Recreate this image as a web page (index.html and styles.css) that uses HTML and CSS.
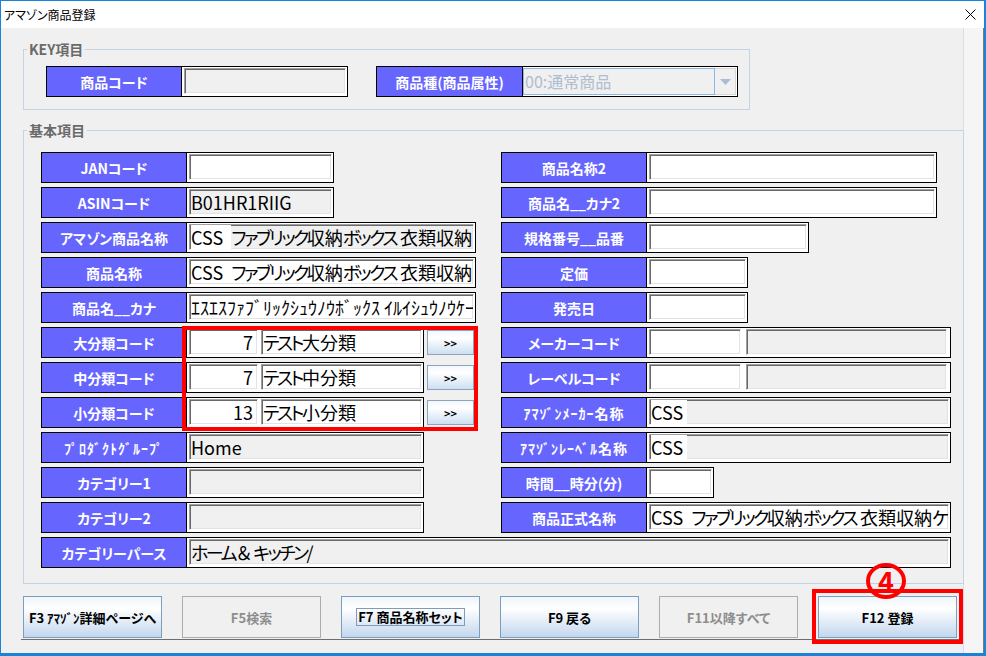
FILE: index.html
```html
<!DOCTYPE html>
<html lang="ja">
<head>
<meta charset="utf-8">
<title>アマゾン商品登録</title>
<link rel="stylesheet" href="styles.css">
</head>
<body>
<div class="window">
  <div class="titlebar">
    <span class="title">アマゾン商品登録</span>
    <svg class="close" width="11" height="11" viewBox="0 0 11 11"><path d="M0.5 0.5 L10.5 10.5 M10.5 0.5 L0.5 10.5" stroke="#000" stroke-width="1" fill="none"/></svg>
  </div>
  <div class="client">
    <div class="panel">
      <fieldset class="group key">
        <legend>KEY項目</legend>
        <div class="key-inner">
          <div class="field w302"><div class="lbl lk1">商品コード</div><div class="area"><div class="box g"></div></div></div>
          <div class="field w362"><div class="lbl lk2">商品種(商品属性)</div>
            <div class="area carea"><div class="combo"><span class="ctext">00:通常商品</span><span class="cbtn"><svg width="11" height="6" viewBox="0 0 11 6"><path d="M0 0 H11 L5.5 6 Z" fill="#a9bcd3"/></svg></span></div></div>
          </div>
        </div>
      </fieldset>

      <fieldset class="group basic">
        <legend>基本項目</legend>
        <div class="grid">
          <div class="cell"><div class="field w293"><div class="lbl">JANコード</div><div class="area"><div class="box"></div></div></div></div>
          <div class="cell"><div class="field w436"><div class="lbl">商品名称2</div><div class="area"><div class="box"></div></div></div></div>

          <div class="cell"><div class="field w293"><div class="lbl">ASINコード</div><div class="area"><div class="box g">B01HR1RIIG</div></div></div></div>
          <div class="cell"><div class="field w436"><div class="lbl">商品名__カナ2</div><div class="area"><div class="box"></div></div></div></div>

          <div class="cell"><div class="field w435"><div class="lbl">アマゾン商品名称</div><div class="area"><div class="box g"><span class="hl">CSS&nbsp; </span><span class="k">ファブリック</span>収納<span class="k">ボックス</span> 衣類収納<span class="k">ケース</span></div></div></div></div>
          <div class="cell"><div class="field w308"><div class="lbl">規格番号__品番</div><div class="area"><div class="box"></div></div></div></div>

          <div class="cell"><div class="field w435"><div class="lbl">商品名称</div><div class="area"><div class="box">CSS&nbsp; <span class="k">ファブリック</span>収納<span class="k">ボックス</span> 衣類収納<span class="k">ケース</span></div></div></div></div>
          <div class="cell"><div class="field w247"><div class="lbl">定価</div><div class="area"><div class="box"></div></div></div></div>

          <div class="cell"><div class="field w435"><div class="lbl">商品名__カナ</div><div class="area"><div class="box">ｴｽｴｽﾌｧﾌﾞﾘｯｸｼｭｳﾉｳﾎﾞｯｸｽ ｲﾙｲｼｭｳﾉｳｹｰｽ</div></div></div></div>
          <div class="cell"><div class="field w247"><div class="lbl">発売日</div><div class="area"><div class="box"></div></div></div></div>

          <div class="cell"><div class="field w383"><div class="lbl">大分類コード</div><div class="area"><div class="box num">7</div><div class="box"><span class="k">テスト</span>大分類</div></div></div><div class="mini">&gt;&gt;</div></div>
          <div class="cell"><div class="field w450"><div class="lbl">メーカーコード</div><div class="area a2"><div class="box code2"></div><div class="box g"></div></div></div></div>

          <div class="cell"><div class="field w383"><div class="lbl">中分類コード</div><div class="area"><div class="box num">7</div><div class="box"><span class="k">テスト</span>中分類</div></div></div><div class="mini">&gt;&gt;</div></div>
          <div class="cell"><div class="field w450"><div class="lbl">レーベルコード</div><div class="area a2"><div class="box code2"></div><div class="box g"></div></div></div></div>

          <div class="cell"><div class="field w383"><div class="lbl">小分類コード</div><div class="area"><div class="box num">13</div><div class="box"><span class="k">テスト</span>小分類</div></div></div><div class="mini">&gt;&gt;</div></div>
          <div class="cell"><div class="field w450"><div class="lbl hw">ｱﾏｿﾞﾝﾒｰｶｰ名称</div><div class="area"><div class="box g"><span class="hl">CSS&nbsp; </span></div></div></div></div>

          <div class="cell"><div class="field w383"><div class="lbl hw">ﾌﾟﾛﾀﾞｸﾄｸﾞﾙｰﾌﾟ</div><div class="area"><div class="box g">Home</div></div></div></div>
          <div class="cell"><div class="field w450"><div class="lbl hw">ｱﾏｿﾞﾝﾚｰﾍﾞﾙ名称</div><div class="area"><div class="box g"><span class="hl">CSS&nbsp; </span></div></div></div></div>

          <div class="cell"><div class="field w383"><div class="lbl">カテゴリー1</div><div class="area"><div class="box g"></div></div></div></div>
          <div class="cell"><div class="field w213"><div class="lbl">時間__時分(分)</div><div class="area"><div class="box"></div></div></div></div>

          <div class="cell"><div class="field w383"><div class="lbl">カテゴリー2</div><div class="area"><div class="box g"></div></div></div></div>
          <div class="cell"><div class="field w450"><div class="lbl">商品正式名称</div><div class="area"><div class="box">CSS&nbsp; <span class="k">ファブリック</span>収納<span class="k">ボックス</span> 衣類収納<span class="k">ケース</span></div></div></div></div>

          <div class="cell span"><div class="field w910"><div class="lbl">カテゴリーパース</div><div class="area"><div class="box g"><span class="k">ホーム</span><span class="amp">＆</span><span class="k">キッチン</span>/</div></div></div></div>
        </div>
      </fieldset>

      <div class="buttons">
        <div class="btn">F3 ｱﾏｿﾞﾝ詳細ページへ</div>
        <div class="btn dis">F5検索</div>
        <div class="btn"><span class="focus">F7 商品名称セット</span></div>
        <div class="btn">F9 戻る</div>
        <div class="btn dis">F11以降すべて</div>
        <div class="btn">F12 登録</div>
      </div>
    </div>
    <div class="strip"></div>
  </div>
  <div class="redbox r1"></div>
  <div class="redbox r2"></div>
  <div class="marker">4</div>
</div>
</body>
</html>
```

FILE: styles.css
```css
* { box-sizing: border-box; }
html, body { margin: 0; padding: 0; }
body {
  width: 986px;
  height: 656px;
  overflow: hidden;
  background: #fff;
  font-family: "Noto Sans CJK JP", "Noto Sans", sans-serif;
  color: #000;
}
.window {
  position: relative;
  width: 986px;
  height: 656px;
  border: 1px solid #1883d7;
  border-right-width: 2px;
  border-bottom-width: 3px;
  display: flex;
  flex-direction: column;
}
.titlebar {
  flex: none;
  height: 27px;
  background: #fff;
  display: flex;
  align-items: center;
  justify-content: space-between;
  padding: 0 8px 0 3px;
}
.title {
  font-size: 12px;
  line-height: 16px;
  font-feature-settings: "palt";
}
.close { display: block; }
.client {
  flex: 1;
  display: flex;
  background: #f0f0f0;
}
.panel {
  width: 963px;
  flex: none;
  border-right: 1px solid #d8dee6;
  padding-top: 13px;
}
.strip {
  flex: 1;
  background: #f5f5f5;
  border-right: 1px solid #7a7a7a;
}
fieldset.group {
  margin: 0 0 0 22px;
  padding: 0 0 0 3px;
  border: 1px solid #c3d3e5;
  min-width: 0;
}
fieldset.group legend {
  padding: 0 2px;
  font-size: 14px;
  line-height: 17px;
  font-weight: bold;
  color: #6a6a6a;
}
fieldset.key { width: 727px; }
fieldset.basic { width: 941px; margin-top: 12px; }
.key-inner {
  display: flex;
  gap: 28px;
  padding: 8px 0 12px 19px;
}
.grid {
  display: grid;
  grid-template-columns: 460px 1fr;
  grid-auto-rows: 31px;
  row-gap: 4px;
  padding: 13px 0 15px 14px;
}
.cell { display: flex; align-items: center; gap: 3px; }
.cell.span { grid-column: 1 / 3; }

.field {
  display: flex;
  height: 31px;
  border: 1px solid #000;
  background: #fff;
  flex: none;
}
.w213 { width: 213px; } .w247 { width: 247px; } .w293 { width: 293px; }
.w302 { width: 302px; } .w308 { width: 308px; } .w362 { width: 362px; }
.w383 { width: 383px; } .w435 { width: 435px; } .w436 { width: 436px; }
.w450 { width: 450px; } .w910 { width: 910px; }

.lbl {
  flex: none;
  width: 145px;
  background: #6666ff;
  border-right: 1px solid #000;
  color: #fff;
  font-weight: bold;
  font-size: 14px;
  display: flex;
  align-items: center;
  justify-content: center;
  white-space: nowrap;
  font-feature-settings: "palt";
}
.lbl.hw { letter-spacing: 1px; font-feature-settings: normal; }
.lk1 { width: 135px; }
.lk2 { width: 146px; }

.area {
  flex: 1;
  min-width: 0;
  display: flex;
  gap: 3px;
  padding: 1px 1px 2px 2px;
}
.area.a2 { gap: 5px; padding-right: 3px; }
.box {
  flex: 1;
  min-width: 0;
  border: 1px solid;
  border-color: #a0a0a0 #ffffff #ffffff #a0a0a0;
  box-shadow: inset 1px 1px 0 #696969, inset -1px -1px 0 #e3e3e3;
  background: #fff;
  font-size: 18px;
  line-height: 24px;
  padding-left: 1px;
  white-space: nowrap;
  overflow: hidden;
  font-feature-settings: "palt";
}
.box.g { background: #f0f0f0; }
.box.num { flex: none; width: 69px; text-align: right; padding-right: 4px; }
.box.code2 { flex: none; width: 92px; }
.hl { background: #fff; }
.k { letter-spacing: -2.5px; }
.amp { font-feature-settings: normal; }

.carea { padding: 1px 1px 1px 0; }
.combo { flex: 1; display: flex; }
.ctext {
  flex: 1;
  border: 1px solid #8db5e2;
  background: #f0f0f0;
  color: #aebdd0;
  font-size: 16px;
  line-height: 25px;
  padding-left: 1px;
  white-space: nowrap;
  overflow: hidden;
}
.cbtn {
  flex: none;
  width: 21px;
  border: 1px solid #d6d6d6;
  border-left: none;
  background: #f0f0f0;
  display: flex;
  align-items: center;
  justify-content: center;
}

.mini {
  flex: none;
  width: 47px;
  height: 25px;
  border: 1px solid #8aa4bd;
  background: linear-gradient(#f3f7fc, #ffffff 30%, #cddff1);
  font-size: 11px;
  font-weight: bold;
  display: flex;
  align-items: center;
  justify-content: center;
}

.buttons {
  display: flex;
  gap: 20px;
  margin: 12px 0 0 20px;
  padding: 0 0 1px 2px;
  border-bottom: 1px solid #6d6d6d;
}
.btn {
  flex: none;
  width: 139px;
  height: 42px;
  border: 1px solid #7b9ebd;
  background: linear-gradient(#eef5fc 0%, #ffffff 28%, #c3d7ee 100%);
  font-size: 13px;
  font-weight: bold;
  display: flex;
  align-items: center;
  justify-content: center;
  white-space: nowrap;
  font-feature-settings: "palt";
}
.btn.dis {
  background: #f0f0f0;
  border-color: #adadad;
  color: #8d8d8d;
}
.focus {
  border: 1px solid #7f9db9;
  padding: 0 1px;
  line-height: 16px;
}

.redbox {
  position: absolute;
  border: 4px solid #ff0000;
}
.r1 { left: 181px; top: 325px; width: 296px; height: 105px; }
.r2 { left: 811px; top: 588px; width: 151px; height: 55px; }
.marker {
  position: absolute;
  left: 865px;
  top: 562px;
  width: 40px;
  height: 36px;
  border: 4px solid #ff0000;
  border-radius: 50%;
  color: #ff0000;
  font-weight: bold;
  font-size: 27px;
  line-height: 28px;
  text-align: center;
}
```
